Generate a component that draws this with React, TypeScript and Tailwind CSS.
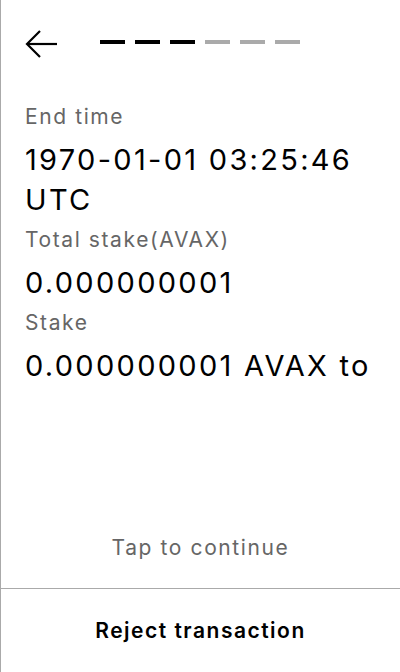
import React from "react";

const steps = [true, true, true, false, false, false];

const fields = [
  { label: "End time", value: "1970-01-01 03:25:46 UTC" },
  { label: "Total stake(AVAX)", value: "0.000000001" },
  { label: "Stake", value: "0.000000001 AVAX to" },
];

export default function App() {
  return (
    <div
      className="flex h-[672px] w-[400px] flex-col border-l border-[#aaaaaa] bg-white text-black"
      style={{ fontFamily: "Inter, 'Noto Sans', sans-serif" }}
    >
      <div className="flex h-[88px] items-center pl-6">
        <svg width="34" height="30" viewBox="0 0 34 30" fill="none">
          <path d="M32 15H3" stroke="black" strokeWidth="2.2" />
          <path d="M15 2L2 15l13 13" stroke="black" strokeWidth="2.2" />
        </svg>
        <div className="ml-[41px] -mt-[4px] flex gap-[10px]">
          {steps.map((done, i) => (
            <div key={i} className={done ? "h-[4px] w-[25px] bg-black" : "h-[4px] w-[25px] bg-[#aaaaaa]"} />
          ))}
        </div>
      </div>

      <div className="flex flex-col pl-6 pr-4 pt-[15px]">
        {fields.map((f) => (
          <div key={f.label} className="mb-[6px] flex flex-col">
            <div className="mb-[9px] text-[21px] leading-[28px] tracking-[1.6px] text-[#666666]">{f.label}</div>
            <div className="text-[29px] leading-[40px] tracking-[2.3px]">{f.value}</div>
          </div>
        ))}
      </div>

      <div className="flex-1" />

      <div className="pb-[26px] text-center text-[21px] leading-[28px] tracking-[1.6px] text-[#666666]">
        Tap to continue
      </div>

      <div className="flex h-[84px] items-center justify-center border-t border-[#aaaaaa]">
        <span className="text-[21px] font-semibold leading-[28px] tracking-[1.5px]">Reject transaction</span>
      </div>
    </div>
  );
}
